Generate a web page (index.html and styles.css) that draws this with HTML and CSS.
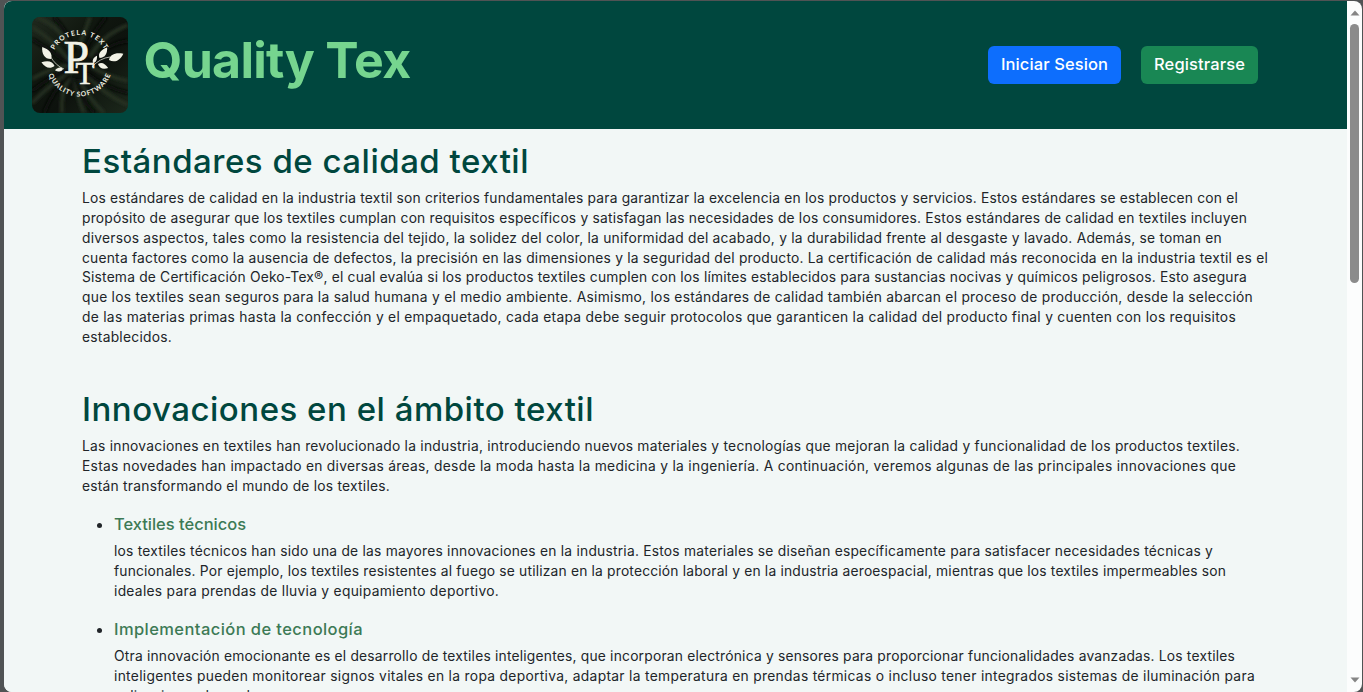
FILE: index.html
```html
<!DOCTYPE html>
<html lang="es">
<head>
<meta charset="utf-8">
<title>Quality Tex</title>
<link rel="stylesheet" href="styles.css">
</head>
<body>
<div class="window">
<div class="page">
<header class="header">
<svg class="logo" viewBox="0 0 96 96">
<defs>
<linearGradient id="cloth" x1="0" y1="0" x2="1" y2="1"><stop offset="0" stop-color="#20291e"/><stop offset=".35" stop-color="#10170f"/><stop offset=".6" stop-color="#0d120d"/><stop offset="1" stop-color="#1c281b"/></linearGradient>
<filter id="soft"><feGaussianBlur stdDeviation="1.6"/></filter>
<clipPath id="frame"><rect width="96" height="96" rx="8"/></clipPath>
<path id="arcTop" d="M22.3 33.1A28.5 28.5 0 0 1 72.7 33.1"/>
<path id="arcBottom" d="M16.5 57.8A33 33 0 0 0 78.5 57.8"/>
<path id="leaf" d="M0 0C-6 0-8.500-5-8-11C-2-9 2-5 0 0Z"/>
</defs>
<g clip-path="url(#frame)">
<rect width="96" height="96" fill="url(#cloth)"/>
<g filter="url(#soft)" fill="none">
<path d="M0 10Q25 25 40 48M4 0Q30 10 40 35M58 0Q52 18 46 30M96 8Q70 18 58 40M0 62Q20 50 40 48M0 86Q24 62 40 55M30 96Q28 76 38 60M52 96Q44 78 43 62M72 96Q56 80 48 64M96 88Q72 78 55 58M96 64Q76 60 60 50" stroke="#253022" stroke-width="3.5"/>
<path d="M0 22Q20 34 38 48M22 0Q36 15 42 35M74 0Q58 20 52 36M96 24Q76 26 60 44M0 74Q20 58 40 52M12 96Q20 74 38 58M62 96Q48 80 44 62M96 76Q72 70 54 56" stroke="#070b07" stroke-width="4"/>
</g>
</g>
<g class="logo-ink">
<text class="logo-ring"><textPath href="#arcTop" textLength="61" lengthAdjust="spacing">PROTELA TEXT</textPath></text>
<text class="logo-ring"><textPath href="#arcBottom" textLength="80" lengthAdjust="spacing">QUALITY SOFTWARE</textPath></text>
<text class="logo-p" x="31.500" y="56">P</text>
<text class="logo-t" x="43.500" y="66.500">T</text>
<use href="#leaf" transform="translate(19 42) scale(1.1)"/>
<use href="#leaf" transform="translate(22.500 49) rotate(-38)"/>
<use href="#leaf" transform="translate(31 52) rotate(-62) scale(.6)"/>
<use href="#leaf" transform="translate(67.500 41) scale(-.95 .95)"/>
<use href="#leaf" transform="translate(77 43) scale(-1 1) rotate(-30) scale(1.150)"/>
<use href="#leaf" transform="translate(66 47) scale(-1 1) rotate(-75) scale(.8)"/>
<use href="#leaf" transform="translate(61 46) scale(-.5 .65)"/>
<path d="M18 39Q24 49 32 52M78 40Q68 41 60 50" fill="none" stroke="#f2f2e6" stroke-width=".7"/>
</g>
</svg>
<h1 class="brand"><span data-w="267">Quality Tex</span></h1>
<nav class="actions">
<a class="btn btn-login"><span data-w="107">Iniciar Sesion</span></a>
<a class="btn btn-register"><span data-w="91">Registrarse</span></a>
</nav>
</header>
<main class="content">
<section class="standards">
<h2><span data-w="447">Estándares de calidad textil</span></h2>
<p>
<span data-w="1156">Los estándares de calidad en la industria textil son criterios fundamentales para garantizar la excelencia en los productos y servicios. Estos estándares se establecen con el</span>
<span data-w="1165">propósito de asegurar que los textiles cumplan con requisitos específicos y satisfagan las necesidades de los consumidores. Estos estándares de calidad en textiles incluyen</span>
<span data-w="1140">diversos aspectos, tales como la resistencia del tejido, la solidez del color, la uniformidad del acabado, y la durabilidad frente al desgaste y lavado. Además, se toman en</span>
<span data-w="1186">cuenta factores como la ausencia de defectos, la precisión en las dimensiones y la seguridad del producto. La certificación de calidad más reconocida en la industria textil es el</span>
<span data-w="1165">Sistema de Certificación Oeko-Tex®, el cual evalúa si los productos textiles cumplen con los límites establecidos para sustancias nocivas y químicos peligrosos. Esto asegura</span>
<span data-w="1171">que los textiles sean seguros para la salud humana y el medio ambiente. Asimismo, los estándares de calidad también abarcan el proceso de producción, desde la selección</span>
<span data-w="1154">de las materias primas hasta la confección y el empaquetado, cada etapa debe seguir protocolos que garanticen la calidad del producto final y cuenten con los requisitos</span>
<span data-w="90">establecidos.</span>
</p>
</section>
<section class="innovations">
<h2><span data-w="512">Innovaciones en el ámbito textil</span></h2>
<p>
<span data-w="1158">Las innovaciones en textiles han revolucionado la industria, introduciendo nuevos materiales y tecnologías que mejoran la calidad y funcionalidad de los productos textiles.</span>
<span data-w="1154">Estas novedades han impactado en diversas áreas, desde la moda hasta la medicina y la ingeniería. A continuación, veremos algunas de las principales innovaciones que</span>
<span data-w="308">están transformando el mundo de los textiles.</span>
</p>
<ul>
<li>
<h3><span data-w="132">Textiles técnicos</span></h3>
<p>
<span data-w="1099">los textiles técnicos han sido una de las mayores innovaciones en la industria. Estos materiales se diseñan específicamente para satisfacer necesidades técnicas y</span>
<span data-w="1112">funcionales. Por ejemplo, los textiles resistentes al fuego se utilizan en la protección laboral y en la industria aeroespacial, mientras que los textiles impermeables son</span>
<span data-w="385">ideales para prendas de lluvia y equipamiento deportivo.</span>
</p>
</li>
<li>
<h3><span data-w="249">Implementación de tecnología</span></h3>
<p>
<span data-w="1121">Otra innovación emocionante es el desarrollo de textiles inteligentes, que incorporan electrónica y sensores para proporcionar funcionalidades avanzadas. Los textiles</span>
<span data-w="1141">inteligentes pueden monitorear signos vitales en la ropa deportiva, adaptar la temperatura en prendas térmicas o incluso tener integrados sistemas de iluminación para</span>
<span data-w="148">aplicaciones de moda.</span>
</p>
</li>
</ul>
</section>
</main>
</div>
<div class="scrollbar">
<svg class="arrow" viewBox="0 0 10 6"><path d="M.5 5.5L5 .5L9.5 5.5Z"/></svg>
<div class="thumb"></div>
<svg class="arrow arrow-down" viewBox="0 0 10 6"><path d="M.5 .5L5 5.5L9.5 .5Z"/></svg>
</div>
</div>
<script src="fit.js"></script>
</body>
</html>
```
FILE: styles.css
```css
* { box-sizing: border-box; }
html, body { height: 100%; margin: 0; overflow: hidden; }
body { background: #505354; color: #212529; font: 430 13.8px/19.86px Inter, "Open Sans", sans-serif; padding: 1px 1px 0 4px; }
.window { display: flex; height: 691px; border-radius: 8px; overflow: hidden; background: #fcfdfd; }
.page { width: 1343px; flex: none; overflow: hidden; background: #f2f7f6; }
.header { display: flex; height: 128px; background: #00473e; padding: 16px 89px 16px 28px; }
.logo { width: 96px; height: 96px; flex: none; margin-top: -.5px; }
.logo-ink { fill: #f2f2e6; }
.logo-ring { font: 700 6.8px Lato, sans-serif; }
.logo-p { font: 400 46px "Liberation Serif", serif; stroke: #f2f2e6; stroke-width: .7; }
.logo-t { font: 400 31px "Liberation Serif", serif; stroke: #f2f2e6; stroke-width: .6; }
.brand { margin: 0 0 0 15.5px; font-size: 50px; font-weight: 650; line-height: 87px; color: #76d58f; }
.actions { display: flex; gap: 20px; margin: 29px 0 0 auto; height: 38px; }
.btn { border-radius: 6px; color: #fff; font-size: 16.5px; font-weight: 500; line-height: 37px; padding: 0 13px; }
.btn-login { background: #0d6efd; }
.btn-register { background: #198754; }
.content { padding: 13px 78px 0; }
[data-w] { display: block; width: max-content; white-space: nowrap; }
h2 { margin: 0 0 8.4px; font-size: 33px; font-weight: 480; line-height: 38.6px; color: #00473e; }
p { margin: 0; }
.innovations { margin-top: 42.6px; }
ul { margin: 15px 0 0; padding-left: 32px; }
li { font-size: 16px; line-height: 24px; margin-bottom: 15.5px; }
li::marker { letter-spacing: 1px; }
li p { font-size: 13.8px; line-height: 19.86px; }
h3 { margin: 0 0 6px; font-size: 16.5px; font-weight: 450; line-height: 24px; color: #3d7a55; }
.scrollbar { width: 15px; display: flex; flex-direction: column; align-items: center; padding: 9px 0 9px; }
.arrow { width: 10px; height: 6px; fill: #858585; }
.thumb { width: 9px; height: 259px; margin-top: 8px; border-radius: 5px; background: #8b8b8b; }
.arrow-down { margin-top: auto; }
```
FILE: fit.js
```js
document.querySelectorAll('[data-w]').forEach(function (line) {
  var measure = Number(line.dataset.w);
  var natural = line.getBoundingClientRect().width;
  line.style.letterSpacing = (measure - natural) / line.textContent.length + 'px';
  line.style.width = measure + 'px';
});
```
